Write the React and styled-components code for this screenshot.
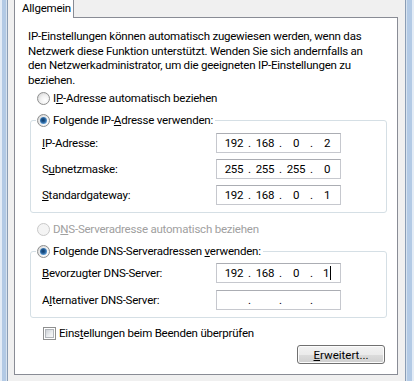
import styled, { createGlobalStyle, css } from 'styled-components';

const GlobalStyle = createGlobalStyle`
  html, body {
    margin: 0;
    padding: 0;
  }
  body {
    width: 414px;
    height: 381px;
    overflow: hidden;
    font-family: Roboto, "Liberation Sans", sans-serif;
    font-size: 11.5px;
    letter-spacing: -0.22px;
    color: #000;
  }
`;

const ipRows = [
  { label: ['', 'I', 'P-Adresse:'], parts: ['192', '168', '0', '2'] },
  { label: ['S', 'u', 'bnetzmaske:'], parts: ['255', '255', '255', '0'] },
  { label: ['', 'S', 'tandardgateway:'], parts: ['192', '168', '0', '1'] },
];

const dnsRows = [
  { label: ['', 'B', 'evorzugter DNS-Server:'], parts: ['192', '168', '0', '1'], caret: true },
  { label: ['A', 'l', 'ternativer DNS-Server:'], parts: ['', '', '', ''] },
];

const Mnemonic = ({ text }) => (
  <>
    {text[0]}
    <u>{text[1]}</u>
    {text[2]}
  </>
);

const IpField = ({ parts, caret }) => (
  <IpBox>
    {parts.map((p, i) => (
      <IpPart key={i}>
        <Seg>
          {p}
          {caret && i === 3 && <Caret />}
        </Seg>
        {i < 3 && <Dot>.</Dot>}
      </IpPart>
    ))}
  </IpBox>
);

const App = () => {
  return (
    <Window>
      <GlobalStyle />
      <Frame />
      <Body>
        <TabRow>
          <Tab>Allgemein</Tab>
          <TabFiller />
        </TabRow>
        <Panel>
          <Intro>
            IP-Einstellungen können automatisch zugewiesen werden, wenn das<br />
            Netzwerk diese Funktion unterstützt. Wenden Sie sich andernfalls an<br />
            den Netzwerkadministrator, um die geeigneten IP-Einstellungen zu<br />
            beziehen.
          </Intro>

          <OptionRow $top={3}>
            <Radio />
            <span>I<u>P</u>-Adresse automatisch beziehen</span>
          </OptionRow>

          <Group>
            <Legend>
              <Radio $checked />
              <span>Folgende IP-<u>A</u>dresse verwenden:</span>
            </Legend>
            <Fields $top={5} $gap={6}>
              {ipRows.map((r, i) => (
                <FieldRow key={i}>
                  <FieldLabel><Mnemonic text={r.label} /></FieldLabel>
                  <IpField parts={r.parts} />
                </FieldRow>
              ))}
            </Fields>
          </Group>

          <OptionRow $top={8} $disabled>
            <Radio $disabled />
            <span>D<u>N</u>S-Serveradresse automatisch beziehen</span>
          </OptionRow>

          <Group>
            <Legend>
              <Radio $checked />
              <span>Folgende DNS-Serveradressen <u>v</u>erwenden:</span>
            </Legend>
            <Fields $top={4} $gap={7}>
              {dnsRows.map((r, i) => (
                <FieldRow key={i}>
                  <FieldLabel><Mnemonic text={r.label} /></FieldLabel>
                  <IpField parts={r.parts} caret={r.caret} />
                </FieldRow>
              ))}
            </Fields>
          </Group>

          <CheckRow>
            <CheckBox />
            <span>Eins<u>t</u>ellungen beim Beenden überprüfen</span>
          </CheckRow>

          <Button><u>E</u>rweitert...</Button>
        </Panel>
      </Body>
      <Frame $right />
    </Window>
  );
};

export default App;

const Window = styled.div`
  display: flex;
  width: 414px;
  height: 381px;
  background: #f0f0f0;
`;

const Frame = styled.div`
  flex: none;
  width: ${p => (p.$right ? '9px' : '8px')};
  background: ${p =>
    p.$right
      ? 'linear-gradient(to right, #8a9db5 0 1px, #d7e3f0 1px 2px, #b3cae5 2px 7px, #e4ecf6 7px 9px)'
      : 'linear-gradient(to right, #e4ecf6 0 2px, #b3cae5 2px 6px, #d7e3f0 6px 7px, #8a9db5 7px 8px)'};
`;

const Body = styled.div`
  flex: 1;
  display: flex;
  flex-direction: column;
  padding: 0 7px 6px 6px;
  min-width: 0;
`;

const TabRow = styled.div`
  display: flex;
  flex: none;
  height: 18px;
`;

const Tab = styled.div`
  width: 60px;
  box-sizing: border-box;
  border-left: 1px solid #898c95;
  border-right: 1px solid #898c95;
  background: #fff;
  padding-left: 7px;
  line-height: 16px;
`;

const TabFiller = styled.div`
  flex: 1;
  border-bottom: 1px solid #898c95;
`;

const Panel = styled.div`
  flex: 1;
  display: flex;
  flex-direction: column;
  background: #fff;
  border: 1px solid #898c95;
  border-top: none;
  padding: 11px 10px 0 13px;
`;

const Intro = styled.p`
  margin: 0;
  line-height: 14.5px;
  white-space: nowrap;
`;

const OptionRow = styled.div`
  display: flex;
  align-items: center;
  gap: 3px;
  height: 16px;
  margin: ${p => p.$top}px 0 0 9px;
  color: ${p => (p.$disabled ? '#a0a0a0' : '#000')};
  white-space: nowrap;
`;

const Radio = styled.span`
  flex: none;
  width: 13px;
  height: 13px;
  box-sizing: border-box;
  border-radius: 50%;
  display: flex;
  align-items: center;
  justify-content: center;
  border: 1px solid ${p => (p.$disabled ? '#c9c9c9' : '#8e8f8f')};
  background: ${p =>
    p.$disabled
      ? '#f4f4f4'
      : 'radial-gradient(circle at 65% 65%, #ffffff 0%, #f1f1f1 45%, #cdcdcd 100%)'};
  ${p =>
    p.$checked &&
    css`
      &::after {
        content: '';
        width: 7px;
        height: 7px;
        border-radius: 50%;
        background: radial-gradient(circle at 45% 45%, #0c3a69 0%, #21588f 35%, #5b9bd5 70%, #a9d2f3 100%);
      }
    `}
`;

const Group = styled.fieldset`
  margin: 6px 0 0 2px;
  padding: 0 0 7px 5px;
  border: 1px solid #d5dfe5;
  border-radius: 3px;
  min-width: 0;
`;

const Legend = styled.legend`
  display: flex;
  align-items: center;
  gap: 3px;
  height: 16px;
  padding: 0 2px 0 1px;
  white-space: nowrap;
`;

const Fields = styled.div`
  display: flex;
  flex-direction: column;
  gap: ${p => p.$gap}px;
  margin: ${p => p.$top}px 0 0 6px;
`;

const FieldRow = styled.div`
  display: grid;
  grid-template-columns: 174px 125px;
  align-items: center;
`;

const FieldLabel = styled.span`
  white-space: nowrap;
`;

const IpBox = styled.div`
  display: flex;
  align-items: center;
  height: 20px;
  box-sizing: border-box;
  padding-left: 3px;
  border: 1px solid #c6c8ce;
  border-top-color: #abadb3;
`;

const IpPart = styled.span`
  display: flex;
`;

const Seg = styled.span`
  width: 28px;
  text-align: center;
`;

const Dot = styled.span`
  width: 3px;
  text-align: center;
`;

const Caret = styled.span`
  display: inline-block;
  width: 1px;
  height: 14px;
  margin-left: 1px;
  vertical-align: -3px;
  background: #000;
`;

const CheckRow = styled.div`
  display: flex;
  align-items: center;
  gap: 3px;
  height: 16px;
  margin: 7px 0 0 15px;
  white-space: nowrap;
`;

const CheckBox = styled.span`
  flex: none;
  display: flex;
  width: 13px;
  height: 13px;
  box-sizing: border-box;
  border: 1px solid #8e8f8f;
  background: #fff;
  padding: 1px;
  &::after {
    content: '';
    flex: 1;
    border: 1px solid #b2b6bb;
    background: linear-gradient(135deg, #cdd1d6 0%, #eceef0 60%, #f8f8f8 100%);
  }
`;

const Button = styled.button`
  align-self: flex-end;
  margin: 4px 2px 0 0;
  width: 88px;
  height: 19px;
  box-sizing: border-box;
  padding: 0;
  border: 1px solid #707070;
  border-radius: 3px;
  background: linear-gradient(to bottom, #f2f2f2 0%, #ebebeb 50%, #dddddd 50%, #cfcfcf 100%);
  box-shadow: inset 0 0 0 1px #fcfcfc;
  font: inherit;
  line-height: 16px;
  color: #000;
`;
